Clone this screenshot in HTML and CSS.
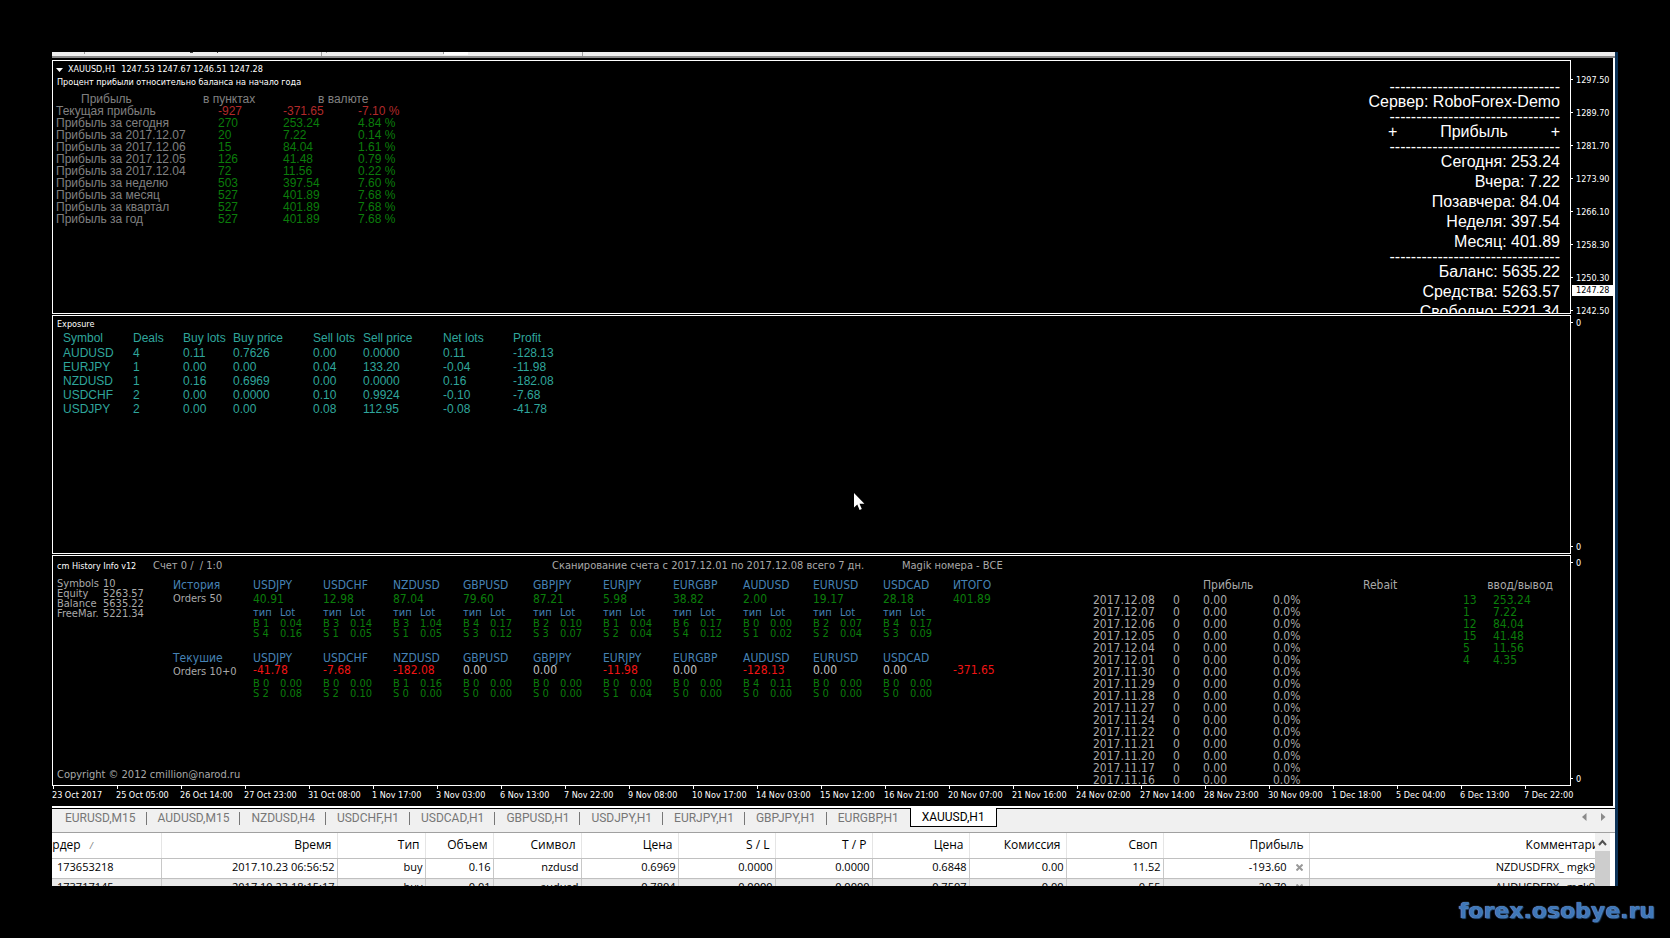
FILE: index.html
```html
<!DOCTYPE html>
<html lang="ru">
  <head>
    <meta charset="UTF-8">
    <title>XAUUSD,H1</title>
    <link rel="stylesheet" href="styles.css">
  </head>
  <body>
    <main class="terminal">
      <div class="toolbar">
        <svg width="540" height="5" viewBox="0 0 540 5">
          <path d="M32.500 0v2M165.500 0v1M274.500 0v1M391.500 0v2" stroke="#999999"/>
          <path d="M138 .5h3M165 .5h1" stroke="#444444"/>
          <path d="M269.500 0v4M530.500 0v4" stroke="#a0a0a0"/>
          <path d="M392 0h24v3h-24z" fill="#ffffff"/>
        </svg>
      </div>

      <div class="charts">
        <div class="row row-price">
          <section class="panel price-panel">
            <div>
              <h1 class="title"><svg class="arrow" width="7" height="4" viewBox="0 0 7 4"><path d="M0 0h7L3.500 4z" fill="#ffffff"/></svg>XAUUSD,H1&nbsp; 1247.53 1247.67 1246.51 1247.28</h1>
              <p class="subtitle">Процент прибыли относительно баланса на начало года</p>
              <table class="profit">
                <colgroup><col class="p1"><col class="p2"><col class="p3"><col class="p4"></colgroup>
                <tr><th class="in-name">Прибыль</th><th class="in-points">в пунктах</th><th colspan="2" class="in-money">в валюте</th></tr>
                <tr class="loss"><th>Текущая прибыль</th><td>-927</td><td>-371.65</td><td>-7.10 %</td></tr>
                <tr><th>Прибыль за сегодня</th><td>270</td><td>253.24</td><td>4.84 %</td></tr>
                <tr><th>Прибыль за 2017.12.07</th><td>20</td><td>7.22</td><td>0.14 %</td></tr>
                <tr><th>Прибыль за 2017.12.06</th><td>15</td><td>84.04</td><td>1.61 %</td></tr>
                <tr><th>Прибыль за 2017.12.05</th><td>126</td><td>41.48</td><td>0.79 %</td></tr>
                <tr><th>Прибыль за 2017.12.04</th><td>72</td><td>11.56</td><td>0.22 %</td></tr>
                <tr><th>Прибыль за неделю</th><td>503</td><td>397.54</td><td>7.60 %</td></tr>
                <tr><th>Прибыль за месяц</th><td>527</td><td>401.89</td><td>7.68 %</td></tr>
                <tr><th>Прибыль за квартал</th><td>527</td><td>401.89</td><td>7.68 %</td></tr>
                <tr><th>Прибыль за год</th><td>527</td><td>401.89</td><td>7.68 %</td></tr>
              </table>
            </div>
            <div class="account">
              <p class="dash">--------------------------------</p>
              <p>Сервер: RoboForex-Demo</p>
              <p class="dash">--------------------------------</p>
              <p class="plus"><span>+</span><span>Прибыль</span><span>+</span></p>
              <p class="dash">--------------------------------</p>
              <p>Сегодня: 253.24</p>
              <p>Вчера: 7.22</p>
              <p>Позавчера: 84.04</p>
              <p>Неделя: 397.54</p>
              <p>Месяц: 401.89</p>
              <p class="dash">--------------------------------</p>
              <p>Баланс: 5635.22</p>
              <p>Средства: 5263.57</p>
              <p>Свободно: 5221.34</p>
            </div>
          </section>
          <div class="scale prices">
            <span>1297.50</span>
            <span>1289.70</span>
            <span>1281.70</span>
            <span>1273.90</span>
            <span>1266.10</span>
            <span>1258.30</span>
            <span>1250.30</span>
            <span>1242.50</span>
            <b class="current">1247.28</b>
          </div>
        </div>

        <div class="row row-exposure">
          <section class="panel">
            <h2 class="title">Exposure</h2>
            <table class="exposure">
              <colgroup><col class="e1"><col class="e2"><col class="e2"><col class="e3"><col class="e2"><col class="e3"><col class="e1"><col class="e3"></colgroup>
              <tr><th>Symbol</th><th>Deals</th><th>Buy lots</th><th>Buy price</th><th>Sell lots</th><th>Sell price</th><th>Net lots</th><th>Profit</th></tr>
              <tr><td>AUDUSD</td><td>4</td><td>0.11</td><td>0.7626</td><td>0.00</td><td>0.0000</td><td>0.11</td><td>-128.13</td></tr>
              <tr><td>EURJPY</td><td>1</td><td>0.00</td><td>0.00</td><td>0.04</td><td>133.20</td><td>-0.04</td><td>-11.98</td></tr>
              <tr><td>NZDUSD</td><td>1</td><td>0.16</td><td>0.6969</td><td>0.00</td><td>0.0000</td><td>0.16</td><td>-182.08</td></tr>
              <tr><td>USDCHF</td><td>2</td><td>0.00</td><td>0.0000</td><td>0.10</td><td>0.9924</td><td>-0.10</td><td>-7.68</td></tr>
              <tr><td>USDJPY</td><td>2</td><td>0.00</td><td>0.00</td><td>0.08</td><td>112.95</td><td>-0.08</td><td>-41.78</td></tr>
            </table>
          </section>
          <div class="scale zero"><span>0</span><span>0</span></div>
        </div>

        <div class="row row-history">
          <section class="panel history">
            <div class="history-head">
              <h2 class="title">cm History Info v12</h2>
              <span class="acc">Счет 0 /&nbsp; / 1:0</span>
              <span class="scan">Сканирование счета с 2017.12.01 по 2017.12.08 всего 7 дн.</span>
              <span>Magik номера - ВСЕ</span>
            </div>
            <div class="history-body">
              <div class="summary">
                <dl>
                  <dt>Symbols</dt><dd>10</dd>
                  <dt>Equity</dt><dd>5263.57</dd>
                  <dt>Balance</dt><dd>5635.22</dd>
                  <dt>FreeMar.</dt><dd>5221.34</dd>
                </dl>
                <p class="copyright">Copyright © 2012 cmillion@narod.ru</p>
              </div>
              <div class="orders">
                <div class="symbols" id="history">
                  <div><h3>История</h3><p class="count">Orders 50</p></div>
                </div>
                <div class="symbols current-orders" id="current">
                  <div><h3>Текушие</h3><p class="count">Orders 10+0</p></div>
                </div>
              </div>
              <table class="days">
                <colgroup><col class="d1"><col class="d2"><col class="d3"><col class="d4"><col class="d5"><col class="d2"><col class="d6"></colgroup>
                <thead>
                  <tr><th></th><th></th><th>Прибыль</th><th></th><th>Rebait</th><th colspan="2" class="in-out">ввод/вывод</th></tr>
                </thead>
                <tbody id="days"></tbody>
              </table>
            </div>
          </section>
          <div class="scale zero"><span>0</span><span>0</span></div>
        </div>

        <div class="time-axis" id="axis"></div>
      </div>

      <nav class="tabs">
        <button>EURUSD,M15</button>
        <button>AUDUSD,M15</button>
        <button>NZDUSD,H4</button>
        <button>USDCHF,H1</button>
        <button>USDCAD,H1</button>
        <button>GBPUSD,H1</button>
        <button>USDJPY,H1</button>
        <button>EURJPY,H1</button>
        <button>GBPJPY,H1</button>
        <button>EURGBP,H1</button>
        <button class="active">XAUUSD,H1</button>
        <svg class="tab-arrows" width="24" height="8" viewBox="0 0 24 8"><path d="M4.500 0v8L0 4zM19 0v8l4.500-4z" fill="#8a8a8a"/></svg>
      </nav>

      <div class="trades">
        <div class="trades-view">
          <table>
            <colgroup><col class="t1"><col class="t2"><col class="t3"><col class="t4"><col class="t3"><col class="t5"><col class="t5"><col class="t5"><col class="t5"><col class="t5"><col class="t5"><col class="t6"><col></colgroup>
            <thead>
              <tr><th class="order">Ордер <i>/</i></th><th>Время</th><th>Тип</th><th>Объем</th><th>Символ</th><th>Цена</th><th>S / L</th><th>T / P</th><th>Цена</th><th>Комиссия</th><th>Своп</th><th>Прибыль</th><th class="comment"><span>Комментарий</span></th></tr>
            </thead>
            <tbody>
              <tr><td class="order">173653218</td><td>2017.10.23 06:56:52</td><td>buy</td><td>0.16</td><td>nzdusd</td><td>0.6969</td><td>0.0000</td><td>0.0000</td><td>0.6848</td><td>0.00</td><td>11.52</td><td>-193.60 <button class="close" aria-label="Close"><svg width="7" height="7" viewBox="0 0 7 7"><path d="M.5.5l6 6M6.500.5l-6 6" stroke="#999999" stroke-width="2"/></svg></button></td><td>NZDUSDFRX_ mgk9</td></tr>
              <tr><td class="order">173717145</td><td>2017.10.23 18:15:17</td><td>buy</td><td>0.01</td><td>audusd</td><td>0.7804</td><td>0.0000</td><td>0.0000</td><td>0.7507</td><td>0.00</td><td>0.55</td><td>-29.70 <button class="close" aria-label="Close"><svg width="7" height="7" viewBox="0 0 7 7"><path d="M.5.5l6 6M6.500.5l-6 6" stroke="#999999" stroke-width="2"/></svg></button></td><td>AUDUSDFRX_ mgk9</td></tr>
            </tbody>
          </table>
        </div>
        <div class="scrollbar">
          <svg width="15" height="18" viewBox="0 0 15 18"><path d="M4 12l3.500-4 3.500 4" fill="none" stroke="#505050" stroke-width="2"/></svg>
          <div class="thumb"></div>
        </div>
      </div>

      <svg class="cursor" width="11" height="18" viewBox="0 0 11 18"><path d="M0 0v14.500l3.300-3 2.300 5.500 2.200-.9-2.300-5.400h4.900z" fill="#ffffff"/></svg>
    </main>
    <div class="watermark">forex.osobye.ru</div>

    <script>
// symbol, profit, buy orders, buy lots, sell orders, sell lots
var closedOrders = [
  ['USDJPY', '40.91', 1, '0.04', 4, '0.16'],
  ['USDCHF', '12.98', 3, '0.14', 1, '0.05'],
  ['NZDUSD', '87.04', 3, '1.04', 1, '0.05'],
  ['GBPUSD', '79.60', 4, '0.17', 3, '0.12'],
  ['GBPJPY', '87.21', 2, '0.10', 3, '0.07'],
  ['EURJPY', '5.98', 1, '0.04', 2, '0.04'],
  ['EURGBP', '38.82', 6, '0.17', 4, '0.12'],
  ['AUDUSD', '2.00', 0, '0.00', 1, '0.02'],
  ['EURUSD', '19.17', 2, '0.07', 2, '0.04'],
  ['USDCAD', '28.18', 4, '0.17', 3, '0.09']
];
var openOrders = [
  ['USDJPY', '-41.78', 0, '0.00', 2, '0.08'],
  ['USDCHF', '-7.68', 0, '0.00', 2, '0.10'],
  ['NZDUSD', '-182.08', 1, '0.16', 0, '0.00'],
  ['GBPUSD', '0.00', 0, '0.00', 0, '0.00'],
  ['GBPJPY', '0.00', 0, '0.00', 0, '0.00'],
  ['EURJPY', '-11.98', 0, '0.00', 1, '0.04'],
  ['EURGBP', '0.00', 0, '0.00', 0, '0.00'],
  ['AUDUSD', '-128.13', 4, '0.11', 0, '0.00'],
  ['EURUSD', '0.00', 0, '0.00', 0, '0.00'],
  ['USDCAD', '0.00', 0, '0.00', 0, '0.00']
];

function colorOf(value) {
  if (Number(value) > 0) return 'up';
  if (Number(value) < 0) return 'down';
  return 'flat';
}

function addSymbols(id, list, total, withHead) {
  var html = '';
  list.forEach(function(s) {
    html += '<div><h3>' + s[0] + '</h3><p class="value ' + colorOf(s[1]) + '">' + s[1] + '</p>';
    if (withHead) html += '<p class="lots-head"><span>тип</span><span>Lot</span></p>';
    html += '<p class="lots"><span>B ' + s[2] + '</span><span>' + s[3] + '</span></p>';
    html += '<p class="lots"><span>S ' + s[4] + '</span><span>' + s[5] + '</span></p></div>';
  });
  html += '<div><h3>' + (withHead ? 'ИТОГО' : '&nbsp;') + '</h3><p class="value ' + colorOf(total) + '">' + total + '</p></div>';
  document.getElementById(id).insertAdjacentHTML('beforeend', html);
}

addSymbols('history', closedOrders, '401.89', true);
addSymbols('current', openOrders, '-371.65', false);

// days with their deposits / withdrawals
var dates = ['2017.12.08', '2017.12.07', '2017.12.06', '2017.12.05', '2017.12.04', '2017.12.01', '2017.11.30', '2017.11.29',
  '2017.11.28', '2017.11.27', '2017.11.24', '2017.11.22', '2017.11.21', '2017.11.20', '2017.11.17', '2017.11.16'];
var moves = [[13, '253.24'], [1, '7.22'], [12, '84.04'], [15, '41.48'], [5, '11.56'], [4, '4.35']];

document.getElementById('days').innerHTML = dates.map(function(d, i) {
  var m = moves[i] || ['', ''];
  return '<tr><td>' + d + '</td><td>0</td><td>0.00</td><td>0.0%</td><td></td><td class="up">' + m[0] + '</td><td class="up">' + m[1] + '</td></tr>';
}).join('');

var times = ['23 Oct 2017', '25 Oct 05:00', '26 Oct 14:00', '27 Oct 23:00', '31 Oct 08:00', '1 Nov 17:00', '3 Nov 03:00', '6 Nov 13:00',
  '7 Nov 22:00', '9 Nov 08:00', '10 Nov 17:00', '14 Nov 03:00', '15 Nov 12:00', '16 Nov 21:00', '20 Nov 07:00', '21 Nov 16:00',
  '24 Nov 02:00', '27 Nov 14:00', '28 Nov 23:00', '30 Nov 09:00', '1 Dec 18:00', '5 Dec 04:00', '6 Dec 13:00', '7 Dec 22:00'];

document.getElementById('axis').innerHTML = times.map(function(t) {
  return '<span>' + t + '</span>';
}).join('');
    </script>
  </body>
</html>
```
FILE: styles.css
```css
* {
  box-sizing: border-box;
}

body {
  margin: 0;
  padding: 52px 52px 0;
  background-color: #000000;
  color: #ffffff;
  font-family: "DejaVu Sans Condensed", "DejaVu Sans", sans-serif;
  font-size: 11px;
  overflow: hidden;
}

h1, h2, h3, p, dl, dd {
  margin: 0;
  font-weight: normal;
}

table {
  border-collapse: collapse;
  table-layout: fixed;
}

th, td {
  padding: 0;
  font-weight: normal;
  text-align: left;
  white-space: nowrap;
}

.terminal {
  position: relative;
  display: flex;
  flex-direction: column;
  height: calc(100vh - 104px);
  border-right: 3px solid #0b3156;
  overflow: hidden;
}

.toolbar {
  flex: none;
  height: 6px;
  background-color: #eeeeee;
  border-bottom: 2px solid #8a8a8a;
}

.toolbar svg {
  display: block;
}

/* chart windows */

.charts {
  flex: 1;
  display: flex;
  flex-direction: column;
  gap: 1px;
  min-height: 0;
  padding-top: 2px;
  border-right: 2px solid #ffffff;
  border-bottom: 2px solid #ffffff;
}

.row {
  display: flex;
  min-height: 0;
}

.row-price {
  flex: 254 0 0;
}

.row-exposure {
  flex: 239 0 0;
}

.row-history {
  flex: 231 0 0;
}

.panel {
  flex: 1;
  min-width: 0;
  border: 1px solid #ffffff;
  overflow: hidden;
}

.title {
  padding-left: 4px;
  font-size: 9px;
  line-height: 17px;
  white-space: pre;
}

.price-panel {
  display: flex;
  justify-content: space-between;
}

.price-panel .title {
  display: flex;
  align-items: center;
  gap: 5px;
  padding-left: 3px;
}

.subtitle {
  padding-left: 4px;
  font-size: 9px;
  line-height: 9px;
}

.profit {
  width: 365px;
  margin: 6px 0 0 3px;
  font-family: "Liberation Sans", Arial, sans-serif;
  font-size: 12px;
  line-height: 12px;
  color: #808080;
}

.profit .p1 { width: 162px; }
.profit .p2 { width: 65px; }
.profit .p3 { width: 75px; }
.profit .p4 { width: 63px; }

.profit td {
  color: #0b7d0b;
}

.profit .loss td {
  color: #b22a2a;
}

.profit .in-name {
  padding-left: 25px;
}

.profit .in-points {
  text-indent: -15px;
}

.profit .in-money {
  padding-left: 35px;
}

.account {
  padding: 21px 10px 0 0;
  font-family: "Liberation Sans", Arial, sans-serif;
  font-size: 16px;
  line-height: 20px;
  text-align: right;
  white-space: nowrap;
}

.account .dash {
  line-height: 10px;
}

.account .plus {
  display: flex;
  justify-content: space-between;
  width: 172px;
  margin-left: auto;
}

.scale {
  position: relative;
  flex: none;
  display: flex;
  flex-direction: column;
  width: 42px;
  font-size: 9px;
  line-height: 11px;
}

.scale span::before {
  content: "";
  display: inline-block;
  width: 2px;
  height: 1px;
  margin-right: 3px;
  vertical-align: 3px;
  background-color: #ffffff;
}

.prices {
  padding-top: 4px;
  line-height: 33px;
}

.current {
  position: absolute;
  top: 225px;
  left: 1px;
  right: 0;
  padding-left: 4px;
  background-color: #ffffff;
  color: #000000;
  font-weight: normal;
  line-height: 11px;
}

.zero {
  justify-content: space-between;
  padding: 3px 0 1px;
}

.exposure {
  width: 520px;
  margin-left: 10px;
  font-family: "Liberation Sans", Arial, sans-serif;
  font-size: 12px;
  line-height: 14px;
  color: #2fa69c;
}

.exposure tr:first-child th {
  line-height: 10px;
  padding-bottom: 3px;
}

.exposure .e1 { width: 70px; }
.exposure .e2 { width: 50px; }
.exposure .e3 { width: 80px; }

/* history window */

.history {
  display: flex;
  flex-direction: column;
  color: #a9a9a9;
}

.history-head {
  display: flex;
  line-height: 20px;
  white-space: nowrap;
}

.history-head .title {
  width: 100px;
  line-height: 20px;
  color: #ffffff;
}

.history-head .acc {
  width: 399px;
}

.history-head .scan {
  width: 350px;
}

.history-body {
  flex: 1;
  display: flex;
  min-height: 0;
  padding-top: 2px;
}

.summary {
  display: flex;
  flex-direction: column;
  justify-content: space-between;
  width: 120px;
  padding: 1px 0 3px 4px;
  white-space: nowrap;
}

.summary dl {
  display: grid;
  grid-template-columns: 46px auto;
  line-height: 10px;
}

.copyright {
  line-height: 14px;
}

.symbols {
  display: grid;
  grid-template-columns: 80px repeat(11, 70px);
  white-space: nowrap;
}

.symbols h3 {
  font-size: 12px;
  line-height: 14px;
  color: #4682b4;
}

.symbols .count {
  line-height: 13px;
}

.symbols .value {
  font-size: 12px;
  line-height: 14px;
}

.up {
  color: #0b7d0b;
}

.symbols .down {
  color: #f01414;
}

.flat {
  color: #c0c0c0;
}

.lots-head, .lots {
  display: grid;
  grid-template-columns: 27px auto;
}

.lots-head {
  line-height: 13px;
  color: #4682b4;
}

.lots {
  line-height: 10px;
  color: #0b7d0b;
}

.current-orders {
  margin-top: 12px;
}

.current-orders .value {
  margin-bottom: 4px;
  line-height: 10px;
}

.days {
  align-self: flex-start;
  width: 460px;
  margin-left: 70px;
  font-size: 12px;
  line-height: 12px;
}

.days .d1 { width: 80px; }
.days .d2 { width: 30px; }
.days .d3 { width: 70px; }
.days .d4 { width: 90px; }
.days .d5 { width: 100px; }
.days .d6 { width: 60px; }

.days th {
  padding-bottom: 2px;
  line-height: 14px;
}

.days .in-out {
  text-align: right;
}

.time-axis {
  flex: none;
  display: grid;
  grid-template-columns: repeat(24, 64px);
  height: 20px;
  margin-top: -1px;
  font-size: 9px;
  line-height: 13px;
  white-space: nowrap;
}

.time-axis span::before {
  content: "";
  display: block;
  width: 1px;
  height: 3px;
  margin-left: 1px;
  background-color: #ffffff;
}

/* chart tabs */

.tabs {
  flex: none;
  display: flex;
  height: 24px;
  margin-top: 1px;
  padding-left: 2px;
  background-color: #f0f0f0;
  border-bottom: 1px solid #a0a0a0;
}

.tabs button {
  position: relative;
  height: 18px;
  padding: 1px 11px 0;
  border: 0;
  background: none;
  color: #777777;
  font-family: Roboto, sans-serif;
  font-size: 12px;
  line-height: 17px;
}

.tabs button:not(:nth-last-of-type(-n+2))::after {
  content: "";
  position: absolute;
  top: 3px;
  right: 0;
  width: 1px;
  height: 13px;
  background-color: #777777;
}

.tabs .active {
  height: 19px;
  margin-top: -1px;
  border: 1px solid #000000;
  border-top: 0;
  background-color: #ffffff;
  color: #000000;
}

.tab-arrows {
  margin: 4px 9px 0 auto;
}

/* open trades */

.trades {
  flex: none;
  display: flex;
  height: 53px;
  padding-right: 5px;
  background-color: #ffffff;
  color: #000000;
  font-family: "Open Sans", sans-serif;
  font-size: 12px;
  overflow: hidden;
}

.trades-view {
  flex: 1;
  min-width: 0;
  overflow: hidden;
}

.trades table {
  width: 100%;
}

.trades th, .trades td {
  text-align: right;
  vertical-align: top;
  border-right: 1px solid #c8c8c8;
  border-bottom: 1px solid #c0c0c0;
}

.trades th {
  height: 25px;
  padding-right: 5px;
  border-right-color: #e5e5e5;
  line-height: 23px;
}

.trades td {
  height: 20px;
  padding-right: 2px;
  font-size: 11px;
  line-height: 16px;
}

.trades th:last-child, .trades td:last-child {
  padding-right: 0;
  border-right: 0;
}

.trades .comment span {
  margin-right: -12px;
}

.trades tbody tr:nth-child(2) {
  background-color: #e9e9e9;
}

.trades th.order {
  text-align: left;
  text-indent: -9px;
}

.trades td.order {
  padding-left: 5px;
  text-align: left;
}

.trades .order i {
  margin-left: 6px;
  color: #777777;
  font-size: 9px;
}

.trades .t1 { width: 109px; }
.trades .t2 { width: 176px; }
.trades .t3 { width: 88px; }
.trades .t4 { width: 68px; }
.trades .t5 { width: 97px; }
.trades .t6 { width: 146px; }

.close {
  width: 7px;
  margin: 0 4px 0 6px;
  padding: 0;
  border: 0;
  background: none;
  line-height: 7px;
}

.scrollbar {
  flex: none;
  width: 15px;
  background-color: #f0f0f0;
}

.scrollbar svg {
  display: block;
}

.thumb {
  height: 35px;
  background-color: #cdcdcd;
}

.cursor {
  position: absolute;
  top: 441px;
  left: 802px;
}

.watermark {
  margin: 9px -37px 0 0;
  color: #3f77b8;
  font-family: "DejaVu Sans", sans-serif;
  font-size: 22px;
  font-weight: bold;
  line-height: 32px;
  text-align: right;
  text-shadow: 0 0 1px #a9cdf0, 1px 1px 1px #1d4677;
}
```
